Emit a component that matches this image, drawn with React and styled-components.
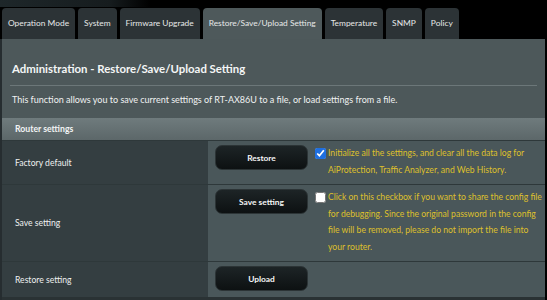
import styled, { createGlobalStyle } from 'styled-components'

const GlobalStyle = createGlobalStyle`
  body {
    margin: 0;
    background: #000;
    font-family: Lato, "Liberation Sans", sans-serif;
  }
`

const Page = styled.div`
  width: 547px;
  height: 300px;
  overflow: hidden;
  background: #000;
`

const TopGlow = styled.div`
  height: 7px;
  background: linear-gradient(to right, #1e272a 0, #161c1e 110px, #000 150px);
`

const TabBar = styled.div`
  display: flex;
  gap: 3px;
  padding-left: 2px;
  height: 32px;
  align-items: flex-end;
`

const Tab = styled.div`
  height: 31px;
  line-height: 31px;
  padding: 0 6px;
  font-size: 8.4px;
  color: #e6e8e8;
  border-radius: 4px 4px 0 0;
  background: ${p => (p.$active ? '#4e595b' : '#2c3336')};
  white-space: nowrap;
`

const Panel = styled.div`
  width: 543px;
  height: 261px;
  background: #4d585a;
  border-left: 2px solid #262d30;
  overflow: hidden;
`

const Title = styled.h1`
  margin: 0;
  padding: 22px 10px 0;
  font-size: 11.4px;
  line-height: 16px;
  font-weight: bold;
  color: #f4f6f6;
`

const Divider = styled.div`
  margin: 8px 8px 0 8px;
  height: 1px;
  background: #6c7779;
`

const Desc = styled.p`
  margin: 0;
  padding: 8px 10px 0;
  font-size: 9px;
  line-height: 12px;
  color: #f0f2f2;
`

const Table = styled.div`
  margin-top: 12px;
  border-bottom: 4px solid #2a3234;
`

const HeaderRow = styled.div`
  height: 22px;
  line-height: 22px;
  padding-left: 13px;
  font-size: 8.7px;
  font-weight: bold;
  color: #f2f4f4;
  background: linear-gradient(to bottom, #6f7b7d, #5c6769);
`

const Row = styled.div`
  display: grid;
  grid-template-columns: 206px 1fr;
  border-top: 1px solid #2e383a;
`

const Label = styled.div`
  display: flex;
  align-items: center;
  padding-left: 13px;
  font-size: 8.6px;
  color: #eef0f0;
  background: #343e41;
`

const Value = styled.div`
  display: flex;
  align-items: flex-start;
  gap: 7px;
  padding: 4px 0 6px 7px;
  background: #4a575a;
  min-width: 0;
`

const Button = styled.button`
  flex: none;
  width: 93px;
  height: 25px;
  border: 1px solid #2c3436;
  border-radius: 7px;
  background: linear-gradient(to bottom, #1d2426, #0d1112);
  color: #f6f6f6;
  font-family: inherit;
  font-size: 8.4px;
  font-weight: bold;
  cursor: pointer;
`

const Note = styled.label`
  flex: none;
  display: flex;
  align-items: flex-start;
  width: 232px;
  font-size: 8.6px;
  line-height: 16.5px;
  color: #dfc02c;
`

const Check = styled.input`
  flex: none;
  width: 11px;
  height: 11px;
  margin: 3px 2px 0 0;
  accent-color: #1f6fe0;
`

const tabs = [
  'Operation Mode',
  'System',
  'Firmware Upgrade',
  'Restore/Save/Upload Setting',
  'Temperature',
  'SNMP',
  'Policy',
]

const App = () => {
  return (
    <Page>
      <GlobalStyle />
      <TopGlow />
      <TabBar>
        {tabs.map(t => (
          <Tab key={t} $active={t === 'Restore/Save/Upload Setting'}>{t}</Tab>
        ))}
      </TabBar>
      <Panel>
        <Title>Administration - Restore/Save/Upload Setting</Title>
        <Divider />
        <Desc>This function allows you to save current settings of RT-AX86U to a file, or load settings from a file.</Desc>
        <Table>
          <HeaderRow>Router settings</HeaderRow>
          <Row>
            <Label>Factory default</Label>
            <Value>
              <Button>Restore</Button>
              <Note>
                <Check type="checkbox" defaultChecked />
                <span>Initialize all the settings, and clear all the data log for AiProtection, Traffic Analyzer, and Web History.</span>
              </Note>
            </Value>
          </Row>
          <Row>
            <Label>Save setting</Label>
            <Value>
              <Button>Save setting</Button>
              <Note>
                <Check type="checkbox" />
                <span>Click on this checkbox if you want to share the config file for debugging. Since the original password in the config file will be removed, please do not import the file into your router.</span>
              </Note>
            </Value>
          </Row>
          <Row>
            <Label>Restore setting</Label>
            <Value>
              <Button>Upload</Button>
            </Value>
          </Row>
        </Table>
      </Panel>
    </Page>
  )
}

export default App
